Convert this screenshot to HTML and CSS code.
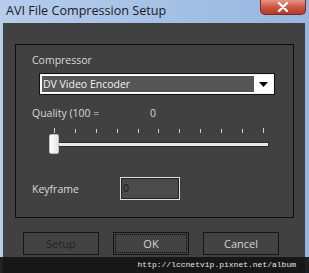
FILE: index.html
```html
<!DOCTYPE html>
<html lang="en">

<head>
    <meta charset="UTF-8" />
    <title>AVI File Compression Setup</title>
    <link rel="stylesheet" href="styles.css">
</head>

<body>
    <div class="window">
        <div class="titlebar">
            <span class="title">AVI File Compression Setup</span>
            <button class="close">
                <svg width="14" height="10" viewBox="0 0 14 10">
                    <path d="M3 1 L11 9 M11 1 L3 9" stroke="white" stroke-width="2.4" stroke-linecap="round" />
                </svg>
            </button>
        </div>

        <div class="client">
            <div class="group">
                <p class="label">Compressor</p>
                <div class="combo">
                    <span class="combo-text">DV Video Encoder</span>
                    <span class="combo-arrow">
                        <svg width="9" height="5" viewBox="0 0 9 5"><path d="M0 0 H9 L4.5 5 Z" fill="black" /></svg>
                    </span>
                </div>

                <div class="quality">
                    <span class="label name">Quality (100 =</span>
                    <span class="label">0</span>
                </div>

                <div class="slider">
                    <div class="ticks">
                        <span class="tick end"></span>
                        <span class="tick"></span>
                        <span class="tick"></span>
                        <span class="tick"></span>
                        <span class="tick"></span>
                        <span class="tick"></span>
                        <span class="tick"></span>
                        <span class="tick"></span>
                        <span class="tick"></span>
                        <span class="tick"></span>
                        <span class="tick end"></span>
                    </div>
                    <div class="track"></div>
                    <div class="thumb"></div>
                </div>

                <div class="keyframe">
                    <span class="label name">Keyframe</span>
                    <div class="input">0</div>
                </div>
            </div>

            <div class="buttons">
                <button class="btn disabled">Setup</button>
                <button class="btn focus">OK</button>
                <button class="btn">Cancel</button>
            </div>
        </div>

        <div class="watermark">http://lccnetvip.pixnet.net/album</div>
    </div>
</body>

</html>
```

FILE: styles.css
```css
body {
    margin: 0;
    font-family: "Open Sans", "DejaVu Sans", sans-serif;
}

.window {
    position: relative;
    width: 309px;
    height: 273px;
    background: linear-gradient(to right, #b6cdec, #a3bfe5 60%, #98b6df);
    overflow: hidden;
}

.titlebar {
    height: 23px;
    display: flex;
    align-items: flex-start;
    justify-content: space-between;
}

.title {
    margin: 2px 0 0 6px;
    font-size: 12.6px;
    color: #1b1b1b;
}

.close {
    width: 46px;
    height: 16px;
    margin: -1px 3px 0 0;
    padding: 0;
    border: 1px solid #7a2a24;
    border-top: none;
    border-radius: 0 0 5px 5px;
    background: linear-gradient(#e6a094, #cf5a47 50%, #b63a28);
    display: flex;
    align-items: center;
    justify-content: center;
}

.client {
    height: 250px;
    margin: 0 4px 0 3px;
    background: #414141;
    padding-top: 21px;
    box-sizing: border-box;
}

.group {
    width: 279px;
    height: 174px;
    margin-left: 12px;
    border: 1px solid #0e0e0e;
    box-sizing: border-box;
    padding: 7px 0 0 16px;
}

.label {
    margin: 0;
    font-size: 10.5px;
    line-height: 16px;
    color: #d8d8d8;
}

.combo {
    width: 236px;
    height: 22px;
    margin: 5px 0 0 7px;
    box-sizing: border-box;
    border: 1px solid #111;
    outline: 1px solid #f4f4f4;
    outline-offset: -2px;
    background: #fff;
    display: flex;
    padding: 2px;
}

.combo-text {
    flex: 1;
    background: #555;
    color: #f2f2f2;
    font-size: 10.5px;
    line-height: 16px;
    padding-left: 1px;
}

.combo-arrow {
    width: 18px;
    display: flex;
    align-items: center;
    justify-content: center;
}

.quality {
    margin-top: 10px;
    display: flex;
}

.quality .name {
    width: 118px;
}

.slider {
    position: relative;
    width: 221px;
    height: 28px;
    margin: 6px 0 0 17px;
}

.ticks {
    display: flex;
    justify-content: space-between;
    align-items: flex-end;
    height: 6px;
    margin: 0 6px 0 5px;
}

.tick {
    width: 1px;
    height: 4px;
    background: #d0d0d0;
}

.tick.end {
    height: 5px;
}

.track {
    height: 3px;
    margin: 9px 1px 0 9px;
    background: #e8e8e8;
    border: 1px solid #2a2a2a;
    border-left: none;
}

.thumb {
    position: absolute;
    left: 0;
    top: 7px;
    width: 10px;
    height: 20px;
    box-sizing: border-box;
    background: linear-gradient(to right, #ffffff, #e6e6e6);
    border: 1px solid #bdbdbd;
    border-radius: 2px;
}

.keyframe {
    margin-top: 22px;
    display: flex;
    align-items: center;
}

.keyframe .name {
    width: 88px;
}

.input {
    width: 60px;
    height: 23px;
    box-sizing: border-box;
    border: 1px solid #e0e0e0;
    outline: 1px solid #222;
    outline-offset: -2px;
    background: #4b4b4b;
    color: #151515;
    font-size: 10.5px;
    line-height: 20px;
    padding-left: 2px;
}

.buttons {
    display: flex;
    gap: 14px;
    margin: 14px 0 0 20px;
}

.btn {
    width: 76px;
    height: 23px;
    padding: 0;
    border: 1px solid #151515;
    background: #434343;
    color: #d4d4d4;
    font-family: "Open Sans", "DejaVu Sans", sans-serif;
    font-size: 11px;
}

.btn.disabled {
    color: #242424;
}

.btn.focus {
    outline: 1px dotted #0a0a0a;
    outline-offset: -3px;
}

.watermark {
    position: absolute;
    left: 0;
    right: 0;
    bottom: 0;
    height: 16px;
    background: rgba(20, 20, 20, 0.92);
    color: #e6e6e6;
    font-family: "Liberation Mono", monospace;
    font-size: 8px;
    line-height: 16px;
    text-align: right;
    padding-right: 13px;
}
```
